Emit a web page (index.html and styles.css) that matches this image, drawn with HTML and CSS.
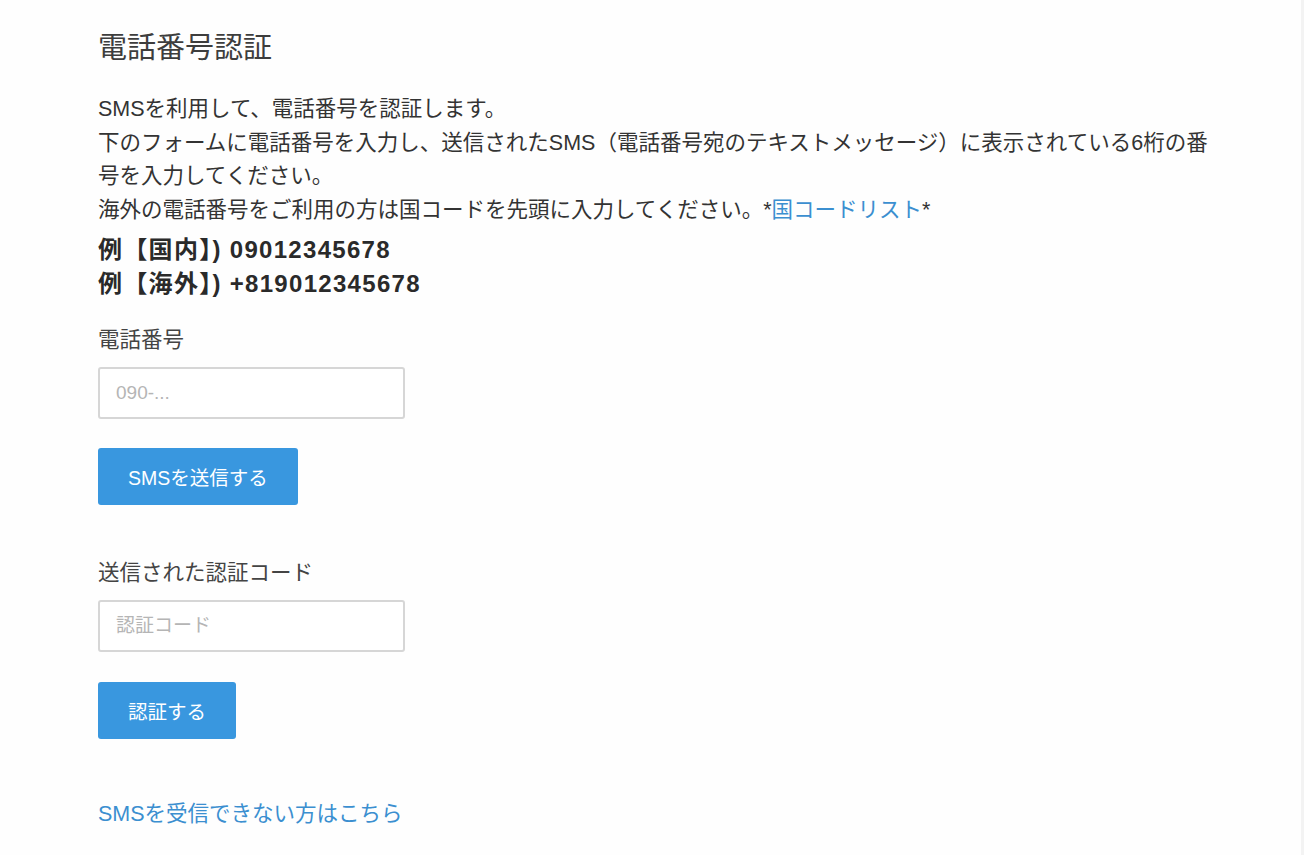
FILE: index.html
```html
<!DOCTYPE html>
<html lang="ja">
<head>
    <meta charset="UTF-8">
    <title>電話番号認証</title>
    <link rel="stylesheet" href="styles.css">
</head>
<body>
<div class="page">
    <div class="main">
        <h1>電話番号認証</h1>

        <p class="intro">
            SMSを利用して、電話番号を認証します。<br>
            下のフォームに電話番号を入力し、送信されたSMS（電話番号宛のテキストメッセージ）に表示されている6桁の番号を入力してください。<br>
            海外の電話番号をご利用の方は国コードを先頭に入力してください。*<a href="#">国コードリスト</a>*
        </p>

        <div class="examples">
            <div>例【国内】) 09012345678</div>
            <div>例【海外】) +819012345678</div>
        </div>

        <!-- Phone number form -->
        <div class="field">
            <label for="phone">電話番号</label>
            <input type="text" id="phone" placeholder="090-...">
        </div>
        <button class="btn">SMSを送信する</button>

        <!-- Code form -->
        <div class="field code-field">
            <label for="code">送信された認証コード</label>
            <input type="text" id="code" placeholder="認証コード">
        </div>
        <button class="btn">認証する</button>

        <a class="help-link" href="#">SMSを受信できない方はこちら</a>
    </div>
    <div class="side"></div>
</div>
</body>
</html>
```

FILE: styles.css
```css
body {
    margin: 0;
    background-color: #ffffff;
    font-family: "Liberation Sans", "Noto Sans CJK JP", sans-serif;
    color: #333;
}
.page {
    display: flex;
    min-height: 855px;
}
.main {
    width: 1301px;
    box-sizing: border-box;
    padding: 29px 82px 0 98px;
    background-color: #fefefe;
}
.side {
    flex: 1;
    border-left: 3px solid #f3f3f3;
}
h1 {
    margin: 0;
    font-size: 29px;
    font-weight: normal;
    line-height: 38px;
    color: #3d3d3d;
}
.intro {
    margin: 26px 0 0;
    font-size: 21.5px;
    line-height: 33.5px;
    color: #333;
}
a {
    color: #3b8fd0;
    text-decoration: none;
}
.examples {
    margin-top: 6px;
    font-size: 24px;
    font-weight: bold;
    line-height: 34px;
    letter-spacing: 1.3px;
    color: #2a2a2a;
}
.field {
    display: flex;
    flex-direction: column;
    margin-top: 23px;
}
.field label {
    font-size: 21.5px;
    line-height: 32px;
    color: #444;
    margin-bottom: 11px;
}
.field input {
    width: 307px;
    height: 52px;
    box-sizing: border-box;
    padding: 0 16px;
    border: 2px solid #d6d6d6;
    border-radius: 3px;
    font-family: inherit;
    font-size: 19px;
    color: #333;
}
.field input::placeholder {
    color: #b5b5b5;
}
.code-field {
    margin-top: 52px;
}
.btn {
    display: block;
    margin-top: 29px;
    height: 57px;
    padding: 0 30px;
    border: none;
    border-radius: 3px;
    background-color: #3997df;
    color: #ffffff;
    font-family: inherit;
    font-size: 19.5px;
    cursor: pointer;
}
.code-field + .btn {
    margin-top: 30px;
}
.help-link {
    display: inline-block;
    margin-top: 58px;
    font-size: 21.5px;
    line-height: 34px;
}
```
